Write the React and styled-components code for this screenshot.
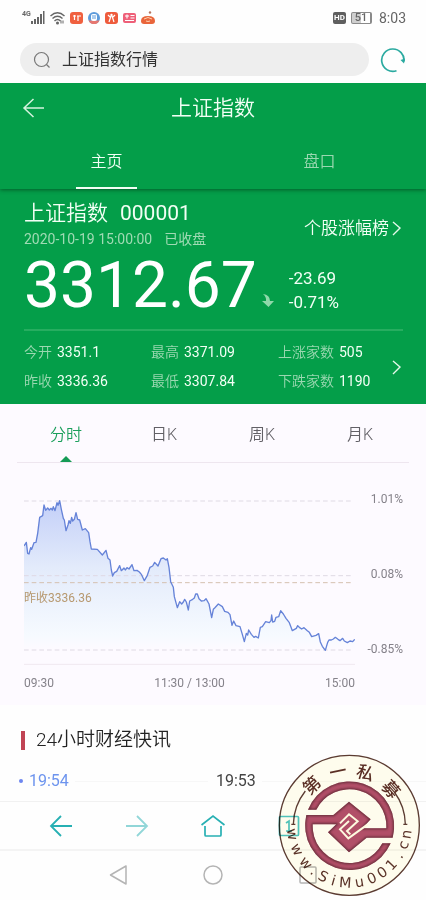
import { useState } from "react";
import styled, { createGlobalStyle } from "styled-components";

const GlobalStyle = createGlobalStyle`
  * {
    box-sizing: border-box;
  }

  body {
    margin: 0;
    background: #fefefe;
    font-family: Roboto, "Noto Sans CJK SC", sans-serif;
    font-weight: 400;
    color: #333333;
  }

  button,
  input {
    font-family: inherit;
    border: 0;
    padding: 0;
    margin: 0;
    background: none;
    color: inherit;
  }

  button {
    cursor: pointer;
  }

  svg {
    display: block;
  }
`;

const Page = styled.div`
  position: relative;
  display: flex;
  flex-direction: column;
  min-height: 100vh;
`;

/* ---------- status bar ---------- */

const StatusBar = styled.div`
  display: flex;
  justify-content: space-between;
  align-items: center;
  height: 36px;
  padding: 0 20px 0 22px;
  color: #666666;
`;

const StatusGroup = styled.div`
  display: flex;
  align-items: center;
  gap: ${({ $gap }) => $gap}px;
`;

const Network = styled.span`
  align-self: flex-start;
  font-size: 7px;
  line-height: 7px;
  font-weight: 700;
`;

const HdBadge = styled.span`
  width: 13px;
  height: 12px;
  border-radius: 2px;
  background: #5f5f5f;
  color: #ffffff;
  font-size: 8px;
  line-height: 12px;
  font-weight: 700;
  text-align: center;
`;

const Battery = styled.span`
  width: 21px;
  height: 12px;
  border: 1px solid #8a8a8a;
  border-right-width: 2px;
  border-radius: 2px;
  background: linear-gradient(90deg, #cfcfcf 50%, #ffffff 50%);
  font-size: 11px;
  line-height: 10px;
  font-weight: 500;
  text-align: center;
`;

const Clock = styled.span`
  font-size: 14px;
  line-height: 20px;
  margin-left: 2px;
`;

/* ---------- search ---------- */

const SearchRow = styled.form`
  display: flex;
  align-items: center;
  gap: 11px;
  padding: 7px 20px 7px;
`;

const SearchBox = styled.label`
  flex: 1;
  display: flex;
  align-items: center;
  gap: 11px;
  height: 33px;
  padding: 0 13px;
  border-radius: 17px;
  background: #eeeeee;
`;

const SearchInput = styled.input`
  flex: 1;
  min-width: 0;
  font-size: 16px;
  line-height: 24px;
  color: #333333;
  outline: none;
`;

/* ---------- green area ---------- */

const Header = styled.header`
  position: relative;
  background: #049e49;
  color: #f2fff5;
  box-shadow: 0 1px 4px rgba(0, 50, 20, 0.6);
  clip-path: inset(0 0 -6px 0);
`;

const TitleRow = styled.div`
  display: grid;
  grid-template-columns: 24px 1fr 24px;
  align-items: center;
  height: 50px;
  padding: 0 22px;
`;

const PageTitle = styled.h1`
  margin: 0;
  font-size: 21px;
  line-height: 30px;
  font-weight: 350;
  text-align: center;
`;

const MainTabs = styled.nav`
  display: grid;
  grid-template-columns: 1fr 1fr;
`;

const MainTab = styled.button`
  display: flex;
  flex-direction: column;
  align-items: center;
  height: 56px;
  padding-top: 17px;
  font-size: 16px;
  line-height: 24px;
  font-weight: 350;
  color: ${({ $active }) => ($active ? "#f2fff5" : "#9bd8b1")};

  &::after {
    content: "";
    width: 61px;
    height: 2px;
    margin-top: 13px;
    background: ${({ $active }) => ($active ? "#f2fff5" : "transparent")};
  }
`;

const Quote = styled.section`
  padding: 9px 23px 8px 24px;
  background: #049e49;
  color: #f2fff5;
`;

const QuoteTop = styled.div`
  display: flex;
  justify-content: space-between;
  align-items: center;
`;

const StockName = styled.h2`
  display: flex;
  gap: 12px;
  margin: 0;
  font-size: 21px;
  line-height: 30px;
  font-weight: 350;
`;

const StockCode = styled.span`
  font-weight: 400;
`;

const Meta = styled.p`
  display: flex;
  gap: 12px;
  margin: 0;
  font-size: 14px;
  line-height: 22px;
  color: #a0dbb4;
`;

const RankLink = styled.a`
  display: flex;
  align-items: center;
  gap: 2px;
  margin-top: 7px;
  font-size: 17px;
  line-height: 24px;
  font-weight: 350;
  color: inherit;
  text-decoration: none;
`;

const PriceRow = styled.div`
  display: flex;
  align-items: center;
  height: 81px;
  padding-bottom: 7px;
  border-bottom: 2px solid #27ad60;
`;

const Price = styled.span`
  font-size: 64px;
  line-height: 70px;
  color: #ffffff;
`;

const TrendArrow = styled.svg`
  margin: 29px 14px 0 4px;
`;

const Changes = styled.div`
  display: flex;
  flex-direction: column;
  margin-top: 8px;
  font-size: 17px;
  line-height: 24px;
`;

const StatsRow = styled.div`
  display: flex;
  align-items: center;
  justify-content: space-between;
  padding-top: 7px;
`;

const Stats = styled.dl`
  display: grid;
  grid-template-columns: 127fr 127fr 113fr;
  flex: 1;
  margin: 0;
`;

const Stat = styled.div`
  display: flex;
  gap: 5px;
  font-size: 14px;
  line-height: 29px;
  white-space: nowrap;
`;

const StatName = styled.dt`
  font-weight: 350;
  color: #9bd8b1;
`;

const StatValue = styled.dd`
  margin: 0;
`;

/* ---------- chart ---------- */

const ChartCard = styled.section`
  padding-bottom: 14px;
  background: #fdfaff;
`;

const PeriodTabs = styled.nav`
  display: grid;
  grid-template-columns: repeat(4, 1fr);
  margin: 0 17px;
  border-bottom: 1px solid #eee6ef;
`;

const PeriodTab = styled.button`
  display: flex;
  flex-direction: column;
  align-items: center;
  height: 58px;
  padding-top: 19px;
  font-size: 16px;
  line-height: 24px;
  font-weight: 350;
  color: ${({ $active }) => ($active ? "#1a9f5b" : "#626066")};

  &::after {
    content: "";
    margin-top: 9px;
    border: 6px solid transparent;
    border-top: 0;
    border-bottom-color: ${({ $active }) => ($active ? "#159b55" : "transparent")};
  }
`;

const ChartBody = styled.div`
  display: flex;
  gap: 4px;
  padding: 17px 23px 0 24px;
`;

const Plot = styled.div`
  position: relative;
  flex: 1;
  min-width: 0;
`;

const PlotSvg = styled.svg`
  width: 100%;
  height: 185px;
`;

const CloseLabel = styled.span`
  position: absolute;
  left: 0;
  top: 110px;
  font-size: 12px;
  line-height: 16px;
  color: #b7986f;
`;

const Scale = styled.div`
  display: flex;
  flex-direction: column;
  justify-content: space-between;
  align-items: flex-end;
  width: 44px;
  height: 177px;
  padding-top: 11px;
  font-size: 12px;
  line-height: 16px;
  color: #85828a;
`;

const TimeAxis = styled.div`
  display: flex;
  justify-content: space-between;
  padding-top: 10px;
  font-size: 12px;
  line-height: 16px;
  color: #85828a;
`;

/* ---------- news ---------- */

const News = styled.section`
  flex: 1;
  padding: 21px 0 8px 21px;
`;

const NewsTitle = styled.h2`
  display: flex;
  align-items: center;
  gap: 11px;
  margin: 0;
  font-size: 19px;
  line-height: 28px;
  font-weight: 350;
  color: #222222;

  &::before {
    content: "";
    width: 4px;
    height: 19px;
    background: #c04454;
  }
`;

const NewsTimes = styled.div`
  display: grid;
  grid-template-columns: 187px 1fr;
  margin-top: 15px;
`;

const NewsTime = styled.time`
  display: flex;
  align-items: center;
  gap: 6px;
  font-size: 16px;
  line-height: 24px;
  color: ${({ $latest }) => ($latest ? "#6d94ee" : "#444444")};

  &::before {
    content: "";
    width: 4px;
    height: 4px;
    margin-left: -2px;
    border-radius: 50%;
    background: ${({ $latest }) => ($latest ? "#6d86f0" : "transparent")};
  }

  &::after {
    content: "";
    flex: 1;
    height: 1px;
    background: #f7f7f7;
  }
`;

/* ---------- bottom bars ---------- */

const BrowserBar = styled.nav`
  display: grid;
  grid-template-columns: repeat(5, 1fr);
  height: 48px;
  padding: 0 23px;
  border-top: 1px solid #f1f1f1;
`;

const SystemBar = styled.nav`
  display: grid;
  grid-template-columns: repeat(3, 1fr);
  height: 52px;
  padding: 0 71px 2px;
  border-top: 2px solid #f4f4f4;
`;

const BarButton = styled.button`
  display: flex;
  align-items: center;
  justify-content: center;
  opacity: ${({ $dim }) => ($dim ? 0.5 : 1)};
`;

const Stamp = styled.svg`
  position: absolute;
  right: 0;
  bottom: 0;
  mix-blend-mode: multiply;
  pointer-events: none;
`;

const stats = [
  ["今开", "3351.1"],
  ["最高", "3371.09"],
  ["上涨家数", "505"],
  ["昨收", "3336.36"],
  ["最低", "3307.84"],
  ["下跌家数", "1190"],
];

const linePoints =
  "72,198 79,187 83,220 87,222 92,203 95,208 102,188 108,187 113,160 119,112 128,107 132,75 137,91 143,84 148,90 153,85 157,90 160,80 165,92 171,68 174,76 179,62 184,88 190,115 193,120 198,152 204,135 207,122 211,130 215,112 218,123 223,118 228,98 233,118 239,120 247,150 256,146 266,158 270,185 274,207 292,208 307,225 318,211 324,235 330,240 334,270 338,288 343,278 350,274 359,257 364,272 372,264 376,270 381,263 387,267 396,254 402,272 411,271 418,276 424,283 433,302 442,286 450,262 458,258 464,247 474,258 483,236 490,234 498,240 502,236 507,262 512,305 520,322 523,350 532,383 539,365 545,372 550,366 554,358 559,366 565,390 569,363 578,358 583,354 587,342 592,342 597,356 604,363 612,362 618,356 627,372 635,413 640,388 644,384 655,372 667,380 674,394 684,397 690,404 696,436 701,423 708,437 720,440 727,463 733,485 739,460 743,465 746,450 754,463 762,472 767,469 775,474 781,442 787,440 797,425 808,428 813,422 815,405 818,426 824,424 828,412 836,410 842,392 850,402 858,415 868,428 877,452 889,445 893,437 898,442 905,447 912,443 922,452 928,457 935,470 948,466 956,461 961,486 967,499 976,511 983,487 987,480 994,480 1000,477 1006,472 1014,478 1020,482 1028,475 1033,483 1042,488 1050,483 1058,485 1064,478";

function Chevron() {
  return (
    <svg width="12" height="18" viewBox="0 0 12 18" fill="none" stroke="#e4f8ea" strokeWidth="1.4">
      <path d="M2 3l7 6-7 7" />
    </svg>
  );
}

function SignalIcon() {
  return (
    <svg width="14" height="14" viewBox="0 0 14 14" fill="#666666">
      <rect x="0" y="10" width="2" height="3" />
      <rect x="3" y="8" width="2" height="5" />
      <rect x="6" y="6" width="2" height="7" />
      <rect x="9" y="3" width="2" height="10" />
      <rect x="12" y="0" width="1.5" height="13" />
    </svg>
  );
}

function WifiIcon() {
  return (
    <svg width="15" height="14" viewBox="0 0 15 14" fill="none" stroke="#666666" strokeWidth="1.4">
      <path d="M0.5 5Q7.5 -1.5 14.5 5" />
      <path d="M2.5 7.5Q7.5 3 12.5 7.5" />
      <path d="M4.5 10Q7.5 7 10.5 10" />
      <circle cx="7.5" cy="12" r="0.8" fill="#666666" />
      <path d="M11 9.5v3M13 9.5v3" strokeWidth="1" />
    </svg>
  );
}

function AppIcons() {
  return (
    <svg width="85" height="14" viewBox="0 0 85 14">
      <rect x="0" y="1" width="13" height="12" rx="3" fill="#f0603f" />
      <path d="M3 5h3M4.500 4v5M8 5v5M7 5h4" stroke="#fff" strokeWidth="1.2" fill="none" />
      <circle cx="24" cy="7" r="6" fill="#5d9bdb" />
      <path d="M18.5 9.5a6 6 0 0 0 11 0z" fill="#e77770" />
      <rect x="21" y="3" width="6" height="7" rx="2" fill="#fff" />
      <path d="M22 5h4M22 7h4" stroke="#5d9bdb" strokeWidth="1" />
      <rect x="35" y="1" width="13" height="12" rx="3" fill="#ee5b3c" />
      <path d="M41 5l-2 6M42 5l2 6M38 4l2 2M45 4l-2 2" stroke="#fff" strokeWidth="1.2" fill="none" />
      <circle cx="41.5" cy="4" r="1.2" fill="#fff" />
      <rect x="53" y="2" width="13" height="10" rx="2" fill="#ee5f78" />
      <path d="M55 5h4M57 3.5v4M60.5 4.500h4M60.5 7h4M55 9.500h9" stroke="#fff" strokeWidth="1.1" />
      <path d="M71 10Q71 5 78 5t7 5q0 3-3 3h-8q-3 0-3-3z" fill="#e9653b" />
      <path d="M74 8q4-3 8 0M76 10q2 1 4 0" stroke="#ffd1ae" strokeWidth="1" fill="none" />
      <circle cx="80" cy="1.5" r="1.2" fill="#b5735c" />
    </svg>
  );
}

function IntradayPlot() {
  return (
    <PlotSvg viewBox="72 0 993 555" preserveAspectRatio="none" role="img" aria-label="分时走势">
      <defs>
        <linearGradient id="area" gradientUnits="userSpaceOnUse" x1="0" y1="62" x2="0" y2="510">
          <stop offset="0" stopColor="#c3cff8" />
          <stop offset="0.45" stopColor="#e3ebfb" />
          <stop offset="0.9" stopColor="#f6faff" />
          <stop offset="1" stopColor="#fdfaff" />
        </linearGradient>
      </defs>
      <polygon points={`72,510 ${linePoints} 1064,510`} fill="url(#area)" />
      {[63, 287, 510].map((y) => (
        <line key={y} x1="72" x2="1056" y1={y} y2={y} stroke="#dfdae4" strokeWidth="3" strokeDasharray="14 9" />
      ))}
      <line x1="72" x2="1056" y1="308" y2="308" stroke="#d5c0b0" strokeWidth="3" strokeDasharray="14 9" />
      <line x1="72" x2="1065" y1="553" y2="553" stroke="#f0e8f0" strokeWidth="3" />
      <polyline points={linePoints} fill="none" stroke="#6683d8" strokeWidth="4" strokeLinejoin="round" />
    </PlotSvg>
  );
}

// [character, degrees from the bottom of the seal]
const sealUrl = [
  ["w", 81],
  ["w", 65],
  ["w", 49],
  [".", 38],
  ["S", 27],
  ["i", 16],
  ["M", 4],
  ["u", -10],
  ["0", -23],
  ["0", -35],
  ["1", -47],
  [".", -59],
  ["c", -70],
  ["n", -81],
];

const sealName = [
  ["第", -43],
  ["一", -12],
  ["私", 17],
  ["募", 49],
];

const sealShape =
  "M121 222H202L249 182L314 235L289 262H361A111 111 0 0 0 151 206H126A134 134 0 0 1 380 290H302L249 334L186 274L211 250H140A111 111 0 0 0 349 307H374A134 134 0 0 1 121 222Z";

function Seal() {
  return (
    <Stamp width="160" height="160" viewBox="0 0 480 480">
      <defs>
        <clipPath id="seal-clip">
          <path d={sealShape} />
        </clipPath>
        <filter id="seal-soft">
          <feGaussianBlur stdDeviation="3" />
        </filter>
      </defs>
      <circle cx="250" cy="253" r="210" fill="#fffdee" stroke="#5b3b31" strokeWidth="4" />
      <path d={sealShape} fill="#b24f68" />
      <g clipPath="url(#seal-clip)">
        <path d={sealShape} fill="none" stroke="#5a2830" strokeWidth="6" filter="url(#seal-soft)" />
      </g>
      <path
        d="M230 239L249 220L275 241L243 270L253 280M249 240L222 265L247 292L304 251M230 239L222 247"
        fill="none"
        stroke="#fffbe0"
        strokeWidth="6"
      />
      <path d="M82 250A168 168 0 0 1 118 150M418 250A168 168 0 0 0 385 153M76 250h12M412 250h12" fill="none" stroke="#5b3b31" strokeWidth="4" />
      <g fill="#5b3328" fontFamily="'DejaVu Sans', sans-serif" fontSize="43" textAnchor="middle">
        {sealUrl.map(([char, deg]) => (
          <text key={deg} x="250" y="440" transform={`rotate(${deg} 250 253)`}>
            {char}
          </text>
        ))}
      </g>
      <g fill="#5b2f25" fontFamily="'Noto Sans CJK SC', sans-serif" fontSize="52" fontWeight="500" textAnchor="middle">
        {sealName.map(([char, deg]) => (
          <text key={deg} x="250" y="107" transform={`rotate(${deg} 250 253)`}>
            {char}
          </text>
        ))}
      </g>
    </Stamp>
  );
}

export default function App() {
  const [query, setQuery] = useState("上证指数行情");
  const [mainTab, setMainTab] = useState("主页");
  const [period, setPeriod] = useState("分时");

  return (
    <>
      <GlobalStyle />
      <Page>
        <StatusBar>
          <StatusGroup $gap={5}>
            <StatusGroup $gap={0}>
              <Network>4G</Network>
              <SignalIcon />
            </StatusGroup>
            <WifiIcon />
            <AppIcons />
          </StatusGroup>
          <StatusGroup $gap={5}>
            <HdBadge>HD</HdBadge>
            <Battery>51</Battery>
            <Clock>8:03</Clock>
          </StatusGroup>
        </StatusBar>

        <SearchRow onSubmit={(e) => e.preventDefault()}>
          <SearchBox>
            <svg width="18" height="18" viewBox="0 0 18 18" fill="none" stroke="#777777" strokeWidth="1.2">
              <circle cx="8.5" cy="8.5" r="7" />
              <path d="M13.5 13.5l3 3" />
            </svg>
            <SearchInput aria-label="搜索" value={query} onChange={(e) => setQuery(e.target.value)} />
          </SearchBox>
          <BarButton type="button" aria-label="刷新">
            <svg width="26" height="26" viewBox="0 0 26 26" fill="none" stroke="#2baaa0" strokeWidth="1.7">
              <path d="M16.5 23.8A11.2 11.2 0 1 1 24 14.5" />
              <path d="M20.5 13l3.5 3.5 1-5z" fill="#2baaa0" stroke="none" />
            </svg>
          </BarButton>
        </SearchRow>

        <Header>
          <TitleRow>
            <BarButton type="button" aria-label="返回">
              <svg width="24" height="22" viewBox="0 0 24 22" fill="none" stroke="#d5f3de" strokeWidth="1.5">
                <path d="M22 11H2M11.5 2L2 11l9.500 9" />
              </svg>
            </BarButton>
            <PageTitle>上证指数</PageTitle>
          </TitleRow>
          <MainTabs>
            {["主页", "盘口"].map((name) => (
              <MainTab key={name} $active={mainTab === name} onClick={() => setMainTab(name)}>
                {name}
              </MainTab>
            ))}
          </MainTabs>
        </Header>

        <Quote>
          <QuoteTop>
            <div>
              <StockName>
                上证指数 <StockCode>000001</StockCode>
              </StockName>
              <Meta>
                <span>2020-10-19 15:00:00</span>
                <span>已收盘</span>
              </Meta>
            </div>
            <RankLink href="#rank">
              个股涨幅榜
              <Chevron />
            </RankLink>
          </QuoteTop>
          <PriceRow>
            <Price>3312.67</Price>
            <TrendArrow width="14" height="16" viewBox="0 0 14 16" fill="#8fd9aa">
              <path d="M2 1Q9 2 9 8h4l-5.500 6L1 8h4Q5.500 4 2 1z" />
            </TrendArrow>
            <Changes>
              <span>-23.69</span>
              <span>-0.71%</span>
            </Changes>
          </PriceRow>
          <StatsRow>
            <Stats>
              {stats.map(([name, value]) => (
                <Stat key={name}>
                  <StatName>{name}</StatName>
                  <StatValue>{value}</StatValue>
                </Stat>
              ))}
            </Stats>
            <BarButton aria-label="更多">
              <Chevron />
            </BarButton>
          </StatsRow>
        </Quote>

        <ChartCard>
          <PeriodTabs>
            {["分时", "日K", "周K", "月K"].map((name) => (
              <PeriodTab key={name} $active={period === name} onClick={() => setPeriod(name)}>
                {name}
              </PeriodTab>
            ))}
          </PeriodTabs>
          <ChartBody>
            <Plot>
              <IntradayPlot />
              <CloseLabel>昨收3336.36</CloseLabel>
              <TimeAxis>
                <span>09:30</span>
                <span>11:30 / 13:00</span>
                <span>15:00</span>
              </TimeAxis>
            </Plot>
            <Scale>
              <span>1.01%</span>
              <span>0.08%</span>
              <span>-0.85%</span>
            </Scale>
          </ChartBody>
        </ChartCard>

        <News>
          <NewsTitle>24小时财经快讯</NewsTitle>
          <NewsTimes>
            <NewsTime $latest>19:54</NewsTime>
            <NewsTime>19:53</NewsTime>
          </NewsTimes>
        </News>

        <BrowserBar>
          <BarButton aria-label="后退">
            <svg width="24" height="24" viewBox="0 0 24 24" fill="none" stroke="#27b0b3" strokeWidth="1.8">
              <path d="M23 12H2M12 2L2 12l10 10" />
            </svg>
          </BarButton>
          <BarButton aria-label="前进" $dim>
            <svg width="24" height="24" viewBox="0 0 24 24" fill="none" stroke="#27b0b3" strokeWidth="1.8">
              <path d="M1 12h21M12 2l10 10-10 10" />
            </svg>
          </BarButton>
          <BarButton aria-label="主页">
            <svg width="24" height="24" viewBox="0 0 24 24" fill="none" stroke="#27b0b3" strokeWidth="1.7">
              <path d="M0.5 11L12 2l11.500 9M4 12v9q0 1 1 1h14q1 0 1-1v-9" />
            </svg>
          </BarButton>
          <BarButton aria-label="标签页">
            <svg width="22" height="22" viewBox="0 0 22 22" fill="none" stroke="#4fc4c6" strokeWidth="1.7">
              <rect x="1.5" y="1.5" width="19" height="19" rx="1" />
              <path d="M8 8l3-2v10M8 16h6" />
            </svg>
          </BarButton>
        </BrowserBar>
        <SystemBar>
          <BarButton aria-label="系统返回">
            <svg width="20" height="22" viewBox="0 0 20 22" fill="none" stroke="#b4b4b4" strokeWidth="1.5" strokeLinejoin="round">
              <path d="M18 2v18L2.500 11z" />
            </svg>
          </BarButton>
          <BarButton aria-label="系统主屏">
            <svg width="20" height="20" viewBox="0 0 20 20" fill="none" stroke="#b4b4b4" strokeWidth="1.5">
              <circle cx="10" cy="10" r="9" />
            </svg>
          </BarButton>
          <BarButton aria-label="最近任务">
            <svg width="18" height="18" viewBox="0 0 18 18" fill="none" stroke="#b4b4b4" strokeWidth="1.5">
              <rect x="1" y="1" width="16" height="16" rx="1" />
            </svg>
          </BarButton>
        </SystemBar>
        <Seal />
      </Page>
    </>
  );
}
